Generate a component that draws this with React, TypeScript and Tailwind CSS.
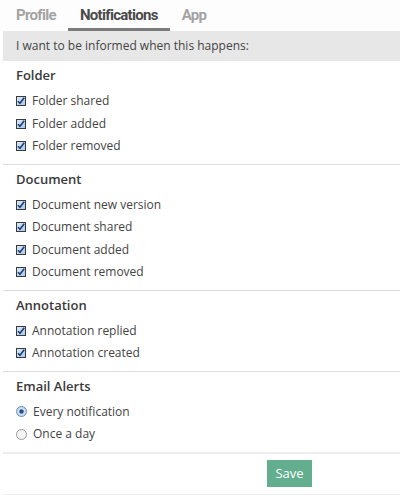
import React from "react";

function Check() {
  return (
    <svg width="10" height="10" viewBox="0 0 10 10" className="shrink-0">
      <defs>
        <linearGradient id="cbg" x1="0" y1="0" x2="1" y2="1">
          <stop offset="0" stopColor="#dbe9f7" />
          <stop offset="1" stopColor="#a9c8e8" />
        </linearGradient>
      </defs>
      <rect x="0.5" y="0.5" width="9" height="9" fill="url(#cbg)" stroke="#3a3a3a" strokeWidth="1" />
      <path d="M2 5.2 L4 7.3 L8.2 1.8" fill="none" stroke="#1d3d7a" strokeWidth="1.6" />
    </svg>
  );
}

function Radio({ on }: { on: boolean }) {
  return (
    <svg width="11" height="11" viewBox="0 0 11 11" className="shrink-0">
      <defs>
        <radialGradient id="rg" cx="0.5" cy="0.5" r="0.6">
          <stop offset="0" stopColor="#e9f2fb" />
          <stop offset="1" stopColor="#b6d2ee" />
        </radialGradient>
      </defs>
      <circle cx="5.5" cy="5.5" r="5" fill={on ? "url(#rg)" : "#f4f4f4"} stroke={on ? "#6b8fb8" : "#9a9a9a"} strokeWidth="1" />
      {on && <circle cx="5.5" cy="5.5" r="2.2" fill="#2a4f86" />}
    </svg>
  );
}

function Section({ title, items, radio }: { title: string; items: string[]; radio?: boolean }) {
  return (
    <div className="pt-[4px] pb-[6px] pl-4">
      <div className="h-5 leading-5 text-[13px] font-semibold text-[#3a3a3a]">{title}</div>
      <div className="mt-[5px]">
        {items.map((t, i) => (
          <div key={t} className="flex items-center h-[22.5px] text-[12px] text-[#444]">
            {radio ? <Radio on={i === 0} /> : <Check />}
            <span className="ml-[6px]">{t}</span>
          </div>
        ))}
      </div>
    </div>
  );
}

export default function App() {
  return (
    <div className="w-[400px] h-[497px] bg-white overflow-hidden" style={{ fontFamily: '"Open Sans", sans-serif' }}>
      <div className="flex h-[31px] pl-[4px] bg-[#fdfdfd]" style={{ fontFamily: 'Roboto, sans-serif' }}>
        <div className="px-3 h-full flex items-center text-[15px] font-bold text-[#a3a3a3] tracking-[-0.7px]">Profile</div>
        <div className="px-3 h-full flex items-center text-[15px] font-bold text-[#4a4a4a] tracking-[-0.7px] border-b-[3px] border-[#7b7b7b] pt-[2px]">Notifications</div>
        <div className="px-3 h-full flex items-center text-[15px] font-bold text-[#a3a3a3] tracking-[-0.7px]">App</div>
      </div>
      <div className="ml-[3px] h-[30px] bg-[#e7e7e7] flex items-center pl-[13px] text-[12px] text-[#444]">
        I want to be informed when this happens:
      </div>
      <Section title="Folder" items={["Folder shared", "Folder added", "Folder removed"]} />
      <div className="ml-[3px] h-px bg-[#dcdcdc]" />
      <Section title="Document" items={["Document new version", "Document shared", "Document added", "Document removed"]} />
      <div className="ml-[3px] h-px bg-[#dcdcdc]" />
      <Section title="Annotation" items={["Annotation replied", "Annotation created"]} />
      <div className="ml-[3px] h-px bg-[#dcdcdc]" />
      <Section title="Email Alerts" items={["Every notification", "Once a day"]} radio />
      <div className="ml-[3px] h-[2px] bg-[#ececec]" />
      <div className="h-[41px] pt-[6px] pl-[267px] border-b border-[#eeeeee] ml-[3px]">
        <button className="w-[45px] h-[27px] bg-[#62ae8f] text-white text-[13px] -ml-[3px]">Save</button>
      </div>
    </div>
  );
}
